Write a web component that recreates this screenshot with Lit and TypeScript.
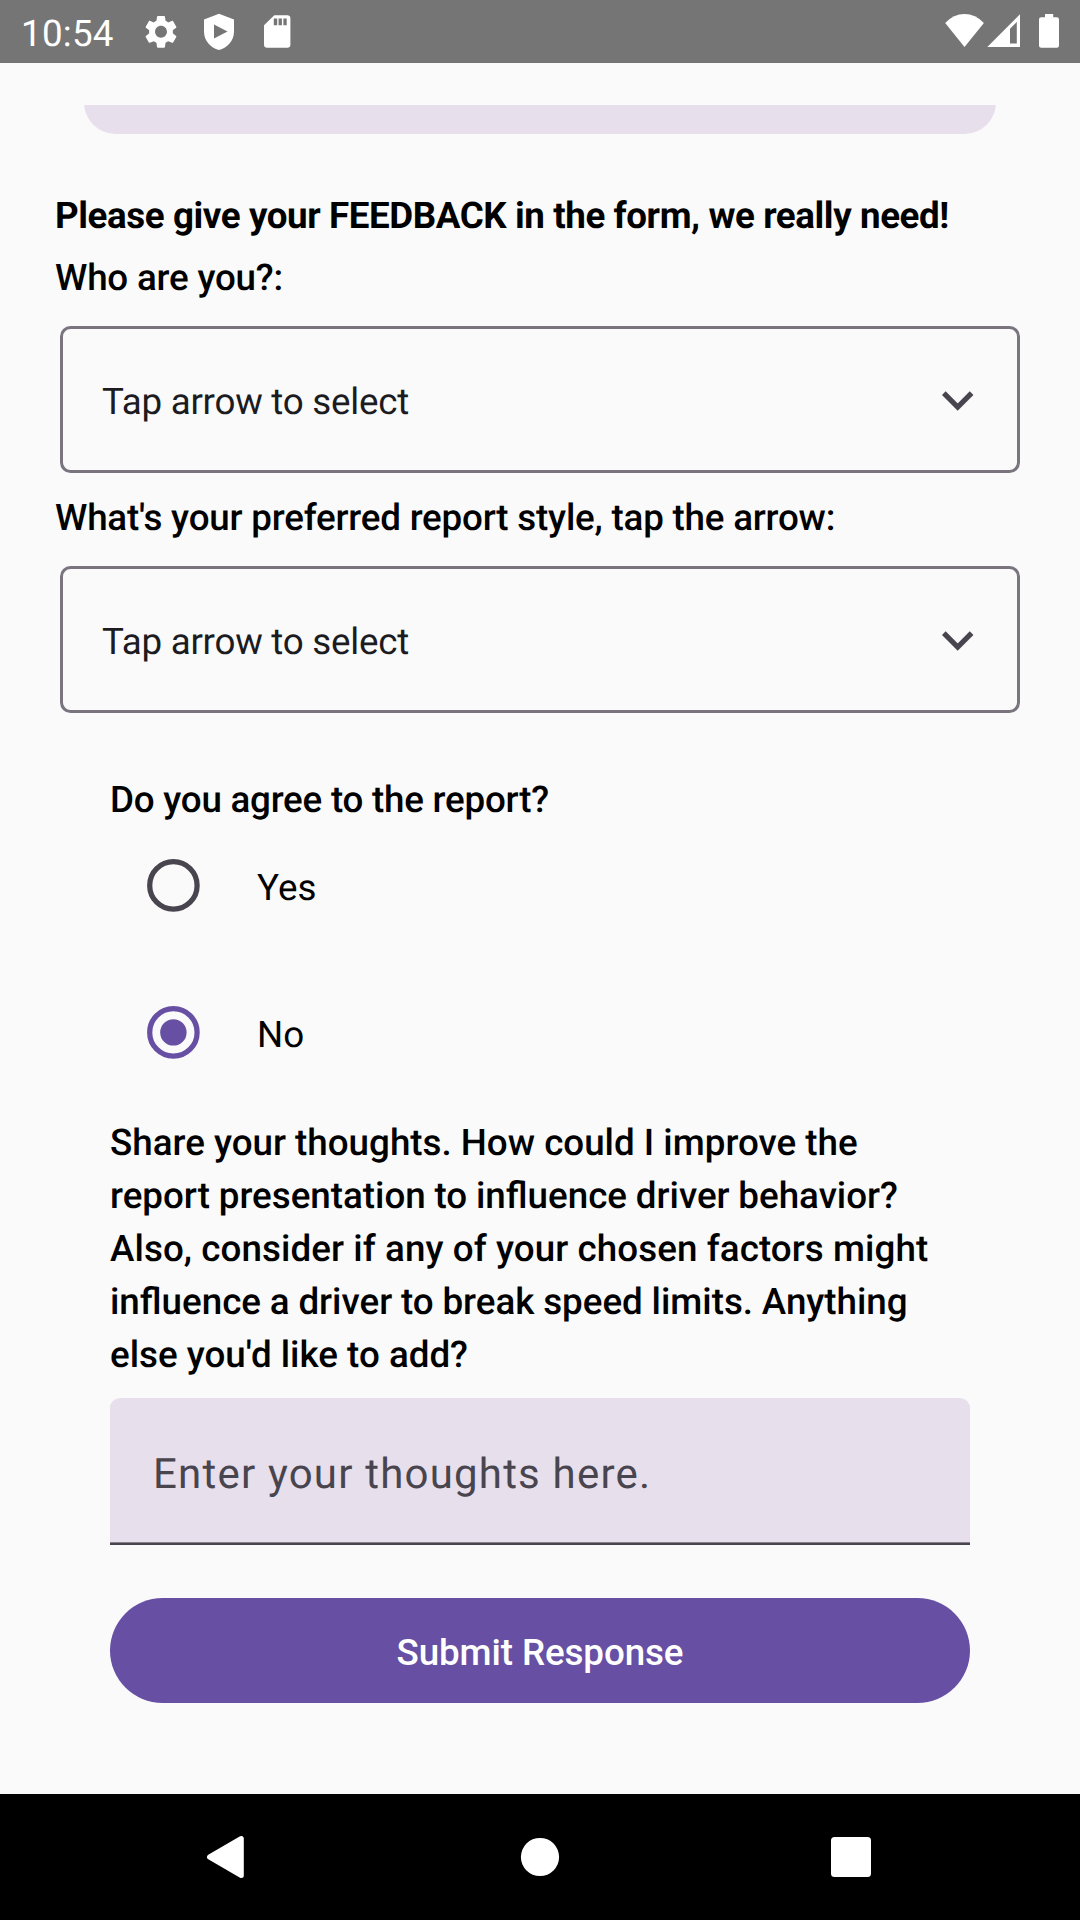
import { LitElement, html, css, svg } from "lit";
import { customElement, property, state } from "lit/decorators.js";

@customElement("status-bar")
class StatusBar extends LitElement {
  static styles = css`
    :host { display: flex; height: 63px; background: #757575; color: #fff; justify-content: space-between; box-sizing: border-box; padding: 0 12px 0 21px; }
    .group { display: flex; height: 63px; }
    .time { font: 400 36.75px/43px Roboto, sans-serif; letter-spacing: 0.25px; padding-top: 12px; width: 119px; }
    svg { display: block; fill: #fff; }
  `;
  render() {
    return html`
      <div class="group">
        <span class="time">10:54</span>
        <svg width="160" height="63" viewBox="140 0 160 63">
          <g transform="translate(141.2 12) scale(1.65)">
            <path d="M19.14 12.94c.04-.3.06-.61.06-.94 0-.32-.02-.64-.07-.94l2.03-1.58c.18-.14.23-.41.12-.61l-1.92-3.32c-.12-.22-.37-.29-.59-.22l-2.39.96c-.5-.38-1.03-.7-1.62-.94l-.36-2.54c-.04-.24-.24-.41-.48-.41h-3.84c-.24 0-.43.17-.47.41l-.36 2.54c-.59.24-1.13.57-1.62.94l-2.39-.96c-.22-.08-.47 0-.59.22L2.74 8.87c-.12.21-.08.47.12.61l2.03 1.58c-.05.3-.09.63-.09.94s.02.64.07.94l-2.03 1.58c-.18.14-.23.41-.12.61l1.92 3.32c.12.22.37.29.59.22l2.39-.96c.5.38 1.03.7 1.62.94l.36 2.54c.05.24.24.41.48.41h3.84c.24 0 .44-.17.47-.41l.36-2.54c.59-.24 1.13-.56 1.62-.94l2.39.96c.22.08.47 0 .59-.22l1.92-3.32c.12-.22.07-.47-.12-.61l-2.01-1.58zM12 15.6c-1.98 0-3.6-1.62-3.6-3.6s1.62-3.6 3.6-3.6 3.6 1.62 3.6 3.6-1.62 3.6-3.6 3.6z" />
          </g>
          <path fill-rule="evenodd" d="M219 13.7L234 19.4V31.5C234 40.8 227.7 47.6 219 50C210.3 47.6 204 40.8 204 31.5V19.4ZM214 24.6V38.6L227.5 31.6Z" />
          <path fill-rule="evenodd" d="M274.3 15.2H287.2Q290.4 15.2 290.4 18.4V44.6Q290.4 47.8 287.2 47.8H267.2Q264 47.8 264 44.6V25.2ZM273.8 18.5V25.3H277.2V18.5ZM278.6 18.5V25.3H281.9V18.5ZM283.4 18.5V25.3H286.7V18.5Z" />
        </svg>
      </div>
      <svg width="128" height="63" viewBox="940 0 128 63">
        <path d="M964.5 47L945.2 23Q953.5 14 964.5 14Q975.5 14 983.9 23Z" />
        <path fill-rule="evenodd" d="M987.3 47L1020 14.3V47ZM1010 28.8V43.6H1016.8V22.1Z" />
        <path d="M1045 14H1053.2V17.3H1056.8Q1059 17.3 1059 19.5V45.6Q1059 47.8 1056.8 47.8H1041.2Q1039 47.8 1039 45.6V19.5Q1039 17.3 1041.2 17.3H1045Z" />
      </svg>
    `;
  }
}

@customElement("select-field")
class SelectField extends LitElement {
  @property() label = "";
  @property() value = "";
  static styles = css`
    :host { display: block; font-family: Roboto, sans-serif; text-rendering: geometricPrecision; }
    .label { font-size: 36.75px; line-height: 53px; font-weight: 500; letter-spacing: -0.2px; color: #000; white-space: nowrap; }
    .box { box-sizing: border-box; margin: 22px 5px 0; height: 147px; border: 3px solid #79747e; border-radius: 10.5px; display: flex; align-items: center; justify-content: space-between; padding: 0 43px 0 39px; }
    .value { font-size: 36.75px; line-height: 53px; letter-spacing: -0.25px; color: #1c1b1f; padding-top: 3px; }
    svg { display: block; padding-top: 2px; }
  `;
  render() {
    return html`
      <div class="label">${this.label}</div>
      <div class="box">
        <span class="value">${this.value}</span>
        <svg width="32" height="20" viewBox="0 0 32 20">
          <path d="M2.4 2.7L16.3 16.6L30.2 2.7" transform="translate(-0.6 -0.6)" fill="none" stroke="#49454f" stroke-width="5.2" />
        </svg>
      </div>
    `;
  }
}

@customElement("app-root")
class AppRoot extends LitElement {
  @state() agree = "No";
  static styles = css`
    :host { display: flex; flex-direction: column; width: 1080px; height: 1920px; background: #fafafa; font-family: Roboto, sans-serif; font-size: 36.75px; line-height: 53px; color: #000; overflow: hidden; text-rendering: geometricPrecision; }
    .content { flex: 1; display: flex; flex-direction: column; padding-top: 42px; }
    .clip { height: 29px; margin: 0 84px; overflow: hidden; display: flex; align-items: flex-end; flex: none; }
    .card { flex: 1; height: 80px; flex-shrink: 0; background: #e7dfec; border-radius: 31.5px; }
    .selects { display: flex; flex-direction: column; padding: 55px 55px 0; }
    .headline { font-weight: 700; letter-spacing: -0.415px; white-space: nowrap; margin-bottom: 9px; }
    .second { margin-top: 18px; }
    .form { display: flex; flex-direction: column; padding: 60px 110px 0; }
    .question { font-weight: 500; white-space: nowrap; }
    .agree { letter-spacing: -0.23px; }
    .options { display: flex; flex-direction: column; gap: 94px; padding: 33px 0 0 37px; }
    .option { display: flex; align-items: center; gap: 57px; height: 53px; }
    .option svg { display: block; }
    .option span { padding-top: 4px; }
    .thoughts { margin-top: 57px; }
    .tight { word-spacing: -0.35px; }
    .loose { letter-spacing: 0.08px; }
    .field { box-sizing: border-box; margin-top: 17px; height: 147px; background: #e7dfec; border-bottom: 2px solid #49454f; box-shadow: inset 0 -1px rgba(73, 69, 79, 0.6); border-radius: 10.5px 10.5px 0 0; display: flex; align-items: center; padding: 8px 42px 0 43px; font-size: 42px; letter-spacing: 1.2px; color: #49454f; }
    .submit { margin: 53px 0 0; padding: 3px 0 0; border: 0; height: 105px; border-radius: 52.5px; background: #6750a4; color: #fff; font: 500 36.75px/53px Roboto, sans-serif; letter-spacing: -0.1px; }
    .nav { height: 126px; flex: none; background: #000; }
    .nav svg { display: block; fill: #fff; }
  `;

  option(name: string) {
    const on = this.agree === name;
    const color = on ? "#6750a4" : "#49454f";
    return html`
      <div class="option" @click=${() => (this.agree = name)}>
        <svg width="53" height="53" viewBox="0 0 53 53">
          <circle cx="26.4" cy="26.4" r="23.7" fill="none" stroke=${color} stroke-width="5.25" />
          ${on ? svg`<circle cx="26.4" cy="26.4" r="13.2" fill=${color} />` : ""}
        </svg>
        <span>${name}</span>
      </div>
    `;
  }

  render() {
    return html`
      <status-bar></status-bar>
      <main class="content">
        <div class="clip"><div class="card"></div></div>
        <section class="selects">
          <div class="headline">Please give your FEEDBACK in the form, we really need!</div>
          <select-field label="Who are you?:" value="Tap arrow to select"></select-field>
          <select-field class="second" label="What's your preferred report style, tap the arrow:" value="Tap arrow to select"></select-field>
        </section>
        <section class="form">
          <div class="question agree">Do you agree to the report?</div>
          <div class="options">${this.option("Yes")}${this.option("No")}</div>
          <div class="question thoughts">
            Share your thoughts. How could I improve the<br /><span class="tight">report presentation to influence driver behavior?</span><br /><span class="loose">Also, consider if any of your chosen factors might</span><br /><span class="tight">influence a driver to break speed limits. Anything</span><br />else you'd like to add?
          </div>
          <div class="field">Enter your thoughts here.</div>
          <button class="submit">Submit Response</button>
        </section>
      </main>
      <nav class="nav">
        <svg width="1080" height="126" viewBox="0 1794 1080 126">
          <path d="M209.5 1857L241.3 1838.5V1875.5Z" stroke="#fff" stroke-width="5" stroke-linejoin="round" />
          <circle cx="540" cy="1857" r="19.1" />
          <rect x="831" y="1837" width="40" height="40" rx="3.5" />
        </svg>
      </nav>
    `;
  }
}
